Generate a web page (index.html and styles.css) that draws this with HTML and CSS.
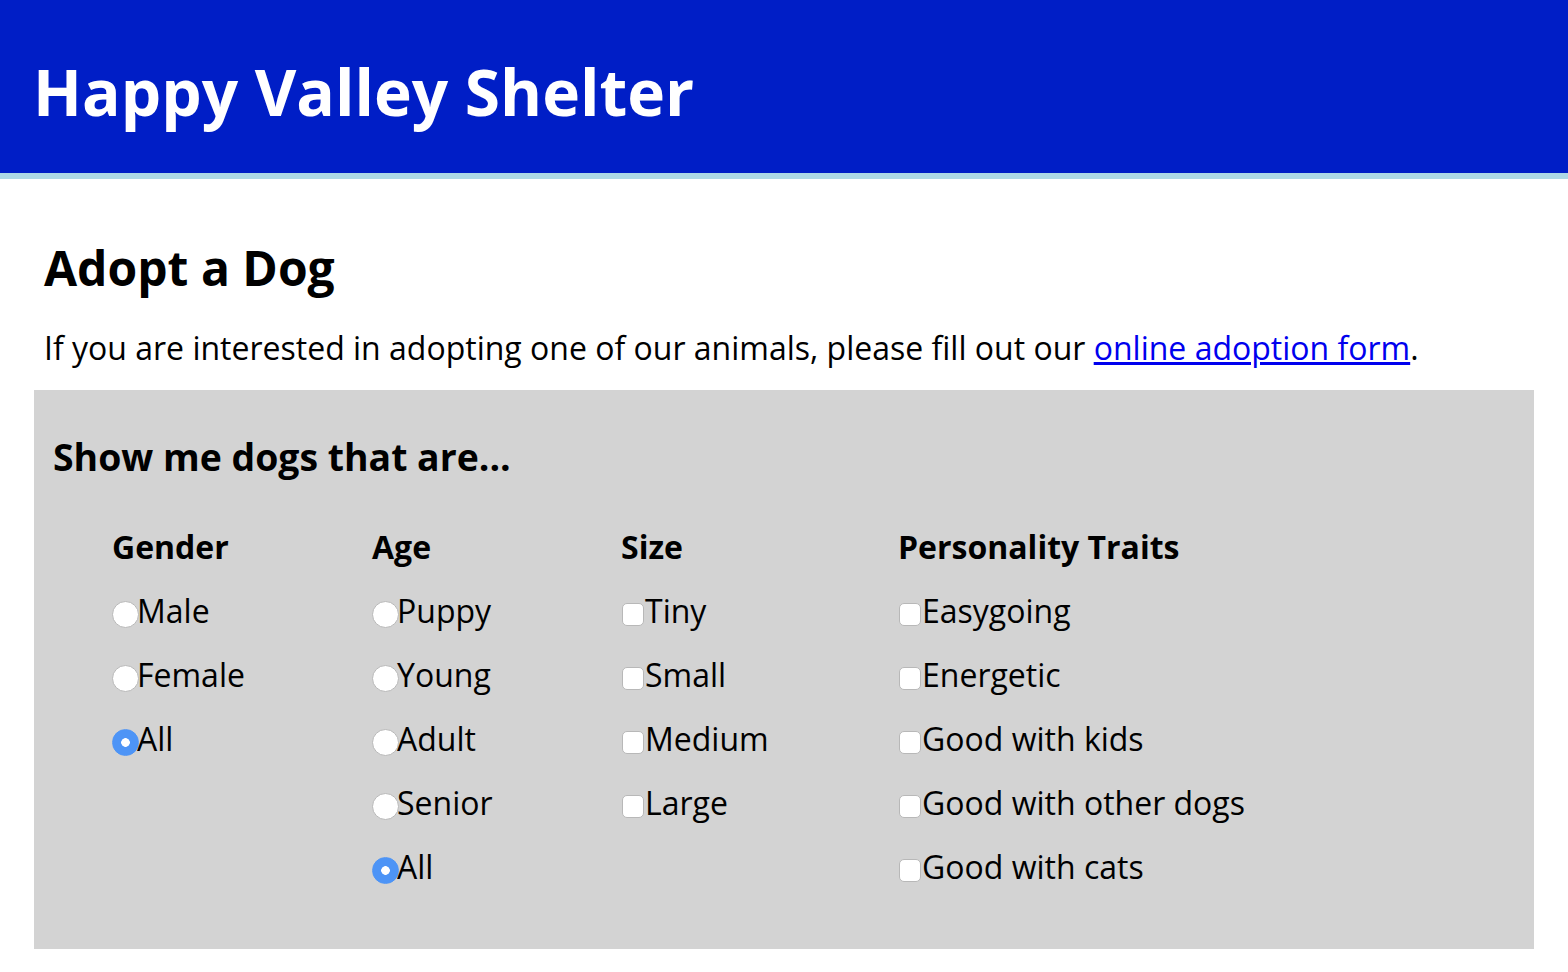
FILE: index.html
```html
<!DOCTYPE html>
<html lang="en">
<head>
<meta charset="utf-8">
<title>Happy Valley Shelter</title>
<link rel="stylesheet" href="styles.css">
</head>
<body>
<header class="site-header">
  <h1 class="site-title">Happy Valley Shelter</h1>
</header>
<main class="content">
  <h2 class="page-title">Adopt a Dog</h2>
  <p class="intro">If you are interested in adopting one of our animals, please fill out our <a href="#" class="link">online adoption form</a>.</p>
  <form class="filters">
    <h3 class="filters-title">Show me dogs that are...</h3>
    <div class="columns">
      <div class="group">
        <h4 class="group-title">Gender</h4>
        <label class="option"><input type="radio" name="gender" class="radio">Male</label>
        <label class="option"><input type="radio" name="gender" class="radio">Female</label>
        <label class="option"><input type="radio" name="gender" class="radio" checked>All</label>
      </div>
      <div class="group">
        <h4 class="group-title">Age</h4>
        <label class="option"><input type="radio" name="age" class="radio">Puppy</label>
        <label class="option"><input type="radio" name="age" class="radio">Young</label>
        <label class="option"><input type="radio" name="age" class="radio">Adult</label>
        <label class="option"><input type="radio" name="age" class="radio">Senior</label>
        <label class="option"><input type="radio" name="age" class="radio" checked>All</label>
      </div>
      <div class="group">
        <h4 class="group-title">Size</h4>
        <label class="option"><input type="checkbox" class="check">Tiny</label>
        <label class="option"><input type="checkbox" class="check">Small</label>
        <label class="option"><input type="checkbox" class="check">Medium</label>
        <label class="option"><input type="checkbox" class="check">Large</label>
      </div>
      <div class="group">
        <h4 class="group-title">Personality Traits</h4>
        <label class="option"><input type="checkbox" class="check">Easygoing</label>
        <label class="option"><input type="checkbox" class="check">Energetic</label>
        <label class="option"><input type="checkbox" class="check">Good with kids</label>
        <label class="option"><input type="checkbox" class="check">Good with other dogs</label>
        <label class="option"><input type="checkbox" class="check">Good with cats</label>
      </div>
    </div>
  </form>
</main>
</body>
</html>
```

FILE: styles.css
```css
html, body {
  margin: 0;
  padding: 0;
  background: #ffffff;
  color: #000000;
  font-family: "Open Sans", "Noto Sans", sans-serif;
}

.site-header {
  background: #001ec6;
  border-bottom: 6px solid #add8e6;
  height: 173px;
  box-sizing: content-box;
  display: flex;
  align-items: center;
  padding: 0 33px;
}

.site-title {
  margin: 0;
  padding-top: 10px;
  color: #ffffff;
  font-size: 64px;
  font-weight: 700;
  line-height: 1;
}

.content {
  padding: 0 34px;
}

.page-title {
  margin: 57px 0 0 10px;
  font-size: 48px;
  font-weight: 700;
  line-height: 64px;
}

.intro {
  margin: 26px 0 0 10px;
  font-size: 32px;
  line-height: 44px;
}

.link {
  color: #0000ee;
}

.filters {
  margin-top: 20px;
  background: #d3d3d3;
  padding: 43px 19px 50px;
}

.filters-title {
  margin: 0;
  font-size: 37.4px;
  font-weight: 700;
  line-height: 48px;
}

.columns {
  display: grid;
  grid-template-columns: 260px 249px 277px auto;
  margin: 44px 0 0 59px;
}

.group {
  display: flex;
  flex-direction: column;
}

.group-title {
  margin: 0 0 10px;
  font-size: 32px;
  font-weight: 700;
  line-height: 44px;
}

.option {
  display: flex;
  align-items: center;
  height: 64px;
  font-size: 32px;
  line-height: 44px;
}

.radio,
.check {
  appearance: none;
  -webkit-appearance: none;
  margin: 6px 0 0 0;
  background: #ffffff;
  border: 1px solid #b8b8b8;
  box-sizing: border-box;
  flex: none;
}

.radio {
  width: 27px;
  height: 27px;
  border-radius: 50%;
  margin-right: -2px;
}

.radio:checked {
  background: radial-gradient(circle, #ffffff 0 4px, #4d94f6 4.6px);
  border-color: #4d94f6;
}

.check {
  width: 22px;
  height: 23px;
  border-radius: 5px;
  margin-left: 1px;
  margin-right: 1px;
}
```
